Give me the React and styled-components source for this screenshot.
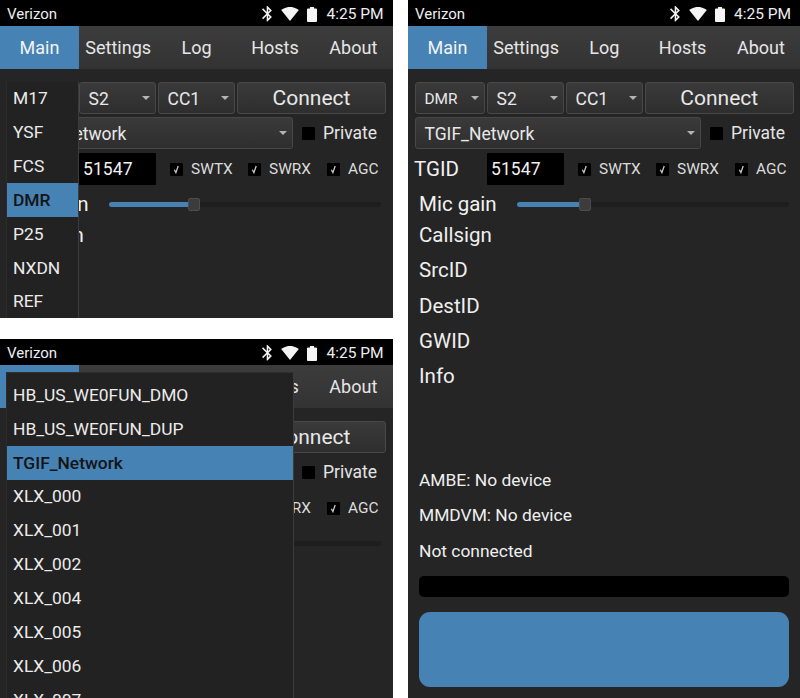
import React from "react";
import styled, { createGlobalStyle } from "styled-components";

const Global = createGlobalStyle`
  html, body { margin: 0; padding: 0; background: #fff; }
  body { font-family: Roboto, "Liberation Sans", sans-serif; width: 800px; height: 698px; overflow: hidden; }
`;

const Canvas = styled.div`
  display: grid;
  grid-template-columns: 392.5px 392px;
  column-gap: 15.5px;
  height: 698px;
`;
const LeftColumn = styled.div`
  display: flex;
  flex-direction: column;
  gap: 21px;
`;
const Phone = styled.div`
  position: relative;
  height: ${(p) => p.$h}px;
  overflow: hidden;
  background: #252525;
  color: #f2f2f2;
`;
const StatusBar = styled.div`
  height: 26px;
  box-sizing: border-box;
  background: #000;
  display: flex;
  align-items: center;
  padding: 2px 9px 0 7px;
  font-size: 15px;
  color: #eee;
`;
const Carrier = styled.span`
  flex: 1;
`;
const Clock = styled.span`
  margin-left: 9px;
  font-size: 15.5px;
`;
const StatusIcon = styled.svg`
  display: block;
  fill: #f4f4f4;
  margin-left: ${(p) => p.$ml || 0}px;
`;
const Tabs = styled.div`
  height: 43px;
  display: grid;
  grid-template-columns: 79px repeat(4, 1fr);
  background: linear-gradient(#3c3c3c, #333);
`;
const Tab = styled.div`
  display: flex;
  align-items: center;
  justify-content: center;
  font-size: 18px;
  color: ${(p) => (p.$active ? "#f4f4f4" : "#e6e6e6")};
  background: ${(p) => (p.$active ? "#4682b4" : "transparent")};
`;
const Body = styled.div`
  padding: 13px 6.5px 0 7px;
`;
const ControlRow = styled.div`
  display: grid;
  grid-template-columns: 70px 77px 77px 1fr;
  column-gap: 2px;
  height: 32px;
`;
const SelectBox = styled.div`
  position: relative;
  display: flex;
  align-items: center;
  box-sizing: border-box;
  padding: 1px 0 0 8.5px;
  font-size: ${(p) => p.$size || 17.5}px;
  color: #e8e8e8;
  background: linear-gradient(#3a3a3a, #2e2e2e);
  border: 1px solid #484848;
  border-radius: 3px;
  &::after {
    content: "";
    position: absolute;
    right: 5px;
    top: 13px;
    border-left: 4px solid transparent;
    border-right: 4px solid transparent;
    border-top: 4px solid #b4b4b4;
  }
`;
const ConnectButton = styled.div`
  display: flex;
  align-items: center;
  justify-content: center;
  box-sizing: border-box;
  font-size: 21px;
  color: #e8e8e8;
  background: linear-gradient(#3a3a3a, #2e2e2e);
  border: 1px solid #484848;
  border-radius: 3px;
`;
const NetworkRow = styled.div`
  display: grid;
  grid-template-columns: 286px auto 1fr;
  align-items: stretch;
  height: 32px;
  margin-top: 3px;
`;
const PrivateToggle = styled.div`
  display: flex;
  align-items: center;
  margin-left: 9px;
  font-size: 17.5px;
  color: #e4e4e4;
`;
const Box = styled.span`
  width: 13px;
  height: 13px;
  background: #000;
  border-radius: 1px;
  margin-right: 8px;
  display: flex;
  align-items: center;
  justify-content: center;
  flex: none;
`;
const TalkgroupRow = styled.div`
  display: grid;
  grid-template-columns: 72px 77px 14px 78px 79px 1fr;
  align-items: center;
  height: 32px;
  margin-top: 4px;
`;
const TgLabel = styled.span`
  font-size: 20.5px;
  margin-left: -1px;
`;
const TgInput = styled.div`
  background: #000;
  height: 32px;
  display: flex;
  align-items: center;
  padding-left: 4px;
  box-sizing: border-box;
  font-size: 17.5px;
  letter-spacing: 0.1px;
  color: #f0f0f0;
  border-radius: 1px;
`;
const CheckItem = styled.div`
  grid-column: ${(p) => p.$col};
  display: flex;
  align-items: center;
  font-size: 15.4px;
  color: #dcdcdc;
`;
const MicRow = styled.div`
  display: flex;
  align-items: center;
  height: 27.5px;
  margin-top: 5px;
  padding-left: 4px;
  font-size: 20.5px;
`;
const MicLabel = styled.span`
  width: 98px;
  flex: none;
`;
const SliderTrack = styled.div`
  position: relative;
  width: 272px;
  height: 5px;
  margin-top: 1px;
  background: #1e1e1e;
  border-radius: 2.5px;
`;
const SliderFill = styled.div`
  height: 100%;
  background: #4682b4;
  border-radius: 2.5px;
`;
const SliderHandle = styled.div`
  position: absolute;
  top: -4px;
  width: 12px;
  height: 13px;
  box-sizing: border-box;
  background: #3c3c3c;
  border: 1px solid #4c4c4c;
  border-radius: 2px;
`;
const Field = styled.div`
  height: 35.3px;
  display: flex;
  align-items: center;
  padding-left: 4px;
  font-size: ${(p) => p.$size}px;
  color: #efefef;
`;
const Spacer = styled.div`
  height: 68.5px;
`;
const LevelBar = styled.div`
  height: 21px;
  margin: 7.5px 5px 0 4px;
  background: #000;
  border-radius: 5px;
`;
const TalkButton = styled.div`
  height: 75px;
  margin: 15px 5px 0 4px;
  background: #4682b4;
  border-radius: 11px;
`;
const Menu = styled.div`
  position: absolute;
  left: 6.5px;
  top: ${(p) => p.$top}px;
  bottom: 0;
  width: ${(p) => p.$w}px;
  box-sizing: border-box;
  padding-top: ${(p) => p.$pad}px;
  background: #222;
  border-right: 1px solid #3c3c3c;
  border-top: ${(p) => (p.$pad ? "1px solid #303030" : "none")};
  overflow: hidden;
  box-shadow: -1px 0 0 #2c2c2c;
`;
const MenuItem = styled.div`
  height: 33.85px;
  display: flex;
  align-items: center;
  padding-left: 6.5px;
  font-size: 17.4px;
  color: ${(p) => (p.$selected ? "#141414" : "#ececec")};
  background: ${(p) => (p.$selected ? "#4682b4" : "transparent")};
  font-weight: ${(p) => (p.$selected ? 500 : 400)};
`;

const TABS = ["Main", "Settings", "Log", "Hosts", "About"];
const MODES = ["M17", "YSF", "FCS", "DMR", "P25", "NXDN", "REF"];
const HOSTS = [
  "HB_US_WE0FUN_DMO",
  "HB_US_WE0FUN_DUP",
  "TGIF_Network",
  "XLX_000",
  "XLX_001",
  "XLX_002",
  "XLX_004",
  "XLX_005",
  "XLX_006",
  "XLX_007",
];

const Tick = () => (
  <svg width="9" height="10" viewBox="0 0 9 10">
    <path d="M2.4 5.8 L3.9 8.6 L6.2 2" fill="none" stroke="#c8c8c8" strokeWidth="1.3" />
  </svg>
);

const Status = () => (
  <StatusBar>
    <Carrier>Verizon</Carrier>
    <StatusIcon width="10" height="15.5" viewBox="5 2 12.8 20">
      <path d="M17.71 7.71L12 2h-1v7.59L6.41 5 5 6.41 10.59 12 5 17.59 6.41 19 11 14.41V22h1l5.71-5.71-4.3-4.29 4.3-4.29zM13 5.83l1.88 1.88L13 9.59V5.83zm1.88 10.46L13 18.17v-3.76l1.88 1.88z" />
    </StatusIcon>
    <StatusIcon $ml={9} width="18" height="14" viewBox="0.3 3 23.4 18.5">
      <path d="M12.01 21.49L23.64 7c-.45-.34-4.93-4-11.64-4C5.28 3 .81 6.66.36 7l11.63 14.49.01.01.01-.01z" />
    </StatusIcon>
    <StatusIcon $ml={8} width="10" height="15" viewBox="7 2 10 20" preserveAspectRatio="none">
      <path d="M15.67 4H14V2h-4v2H8.33C7.6 4 7 4.6 7 5.33v15.33C7 21.4 7.6 22 8.33 22h7.33c.74 0 1.34-.6 1.34-1.33V5.33C17 4.6 16.4 4 15.67 4z" />
    </StatusIcon>
    <Clock>4:25 PM</Clock>
  </StatusBar>
);

const Screen = ({ gain }) => (
  <>
    <Status />
    <Tabs>
      {TABS.map((t, i) => (
        <Tab key={t} $active={i === 0}>{t}</Tab>
      ))}
    </Tabs>
    <Body>
      <ControlRow>
        <SelectBox $size={15.4}>DMR</SelectBox>
        <SelectBox>S2</SelectBox>
        <SelectBox>CC1</SelectBox>
        <ConnectButton>Connect</ConnectButton>
      </ControlRow>
      <NetworkRow>
        <SelectBox>TGIF_Network</SelectBox>
        <PrivateToggle>
          <Box />
          Private
        </PrivateToggle>
      </NetworkRow>
      <TalkgroupRow>
        <TgLabel>TGID</TgLabel>
        <TgInput>51547</TgInput>
        <CheckItem $col={4}><Box><Tick /></Box>SWTX</CheckItem>
        <CheckItem $col={5}><Box><Tick /></Box>SWRX</CheckItem>
        <CheckItem $col={6}><Box><Tick /></Box>AGC</CheckItem>
      </TalkgroupRow>
      <MicRow>
        <MicLabel>Mic gain</MicLabel>
        <SliderTrack>
          <SliderFill style={{ width: `${gain + 2}px` }} />
          <SliderHandle style={{ left: `${gain}px` }} />
        </SliderTrack>
      </MicRow>
      <Field $size={20.5}>Callsign</Field>
      <Field $size={20.5}>SrcID</Field>
      <Field $size={20.5}>DestID</Field>
      <Field $size={20.5}>GWID</Field>
      <Field $size={20.5}>Info</Field>
      <Spacer />
      <Field $size={17.4}>AMBE: No device</Field>
      <Field $size={17.4}>MMDVM: No device</Field>
      <Field $size={17.4}>Not connected</Field>
      <LevelBar />
      <TalkButton />
    </Body>
  </>
);

export default function App() {
  return (
    <Canvas>
      <Global />
      <LeftColumn>
        <Phone $h={318}>
          <Screen gain={79} />
          <Menu $top={81.5} $w={72.5} $pad={0}>
            {MODES.map((m) => (
              <MenuItem key={m} $selected={m === "DMR"}>{m}</MenuItem>
            ))}
          </Menu>
        </Phone>
        <Phone $h={359}>
          <Screen gain={79} />
          <Menu $top={33} $w={287.5} $pad={5}>
            {HOSTS.map((h) => (
              <MenuItem key={h} $selected={h === "TGIF_Network"}>{h}</MenuItem>
            ))}
          </Menu>
        </Phone>
      </LeftColumn>
      <Phone $h={698}>
        <Screen gain={62} />
      </Phone>
    </Canvas>
  );
}
